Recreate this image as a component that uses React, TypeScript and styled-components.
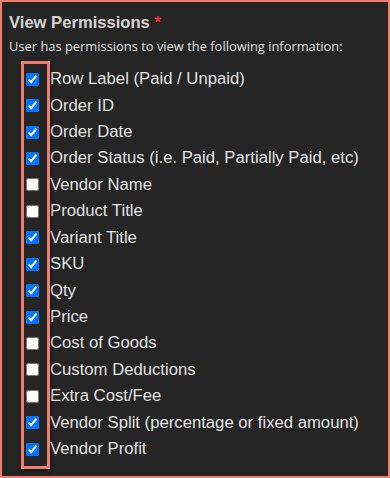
import React from "react";
import styled, { createGlobalStyle } from "styled-components";

const GlobalStyle = createGlobalStyle`
  html, body {
    margin: 0;
    padding: 0;
    background: #252525;
  }
`;

type Permission = { label: string; checked: boolean };

const permissions: Permission[] = [
  { label: "Row Label (Paid / Unpaid)", checked: true },
  { label: "Order ID", checked: true },
  { label: "Order Date", checked: true },
  { label: "Order Status (i.e. Paid, Partially Paid, etc)", checked: true },
  { label: "Vendor Name", checked: false },
  { label: "Product Title", checked: false },
  { label: "Variant Title", checked: true },
  { label: "SKU", checked: true },
  { label: "Qty", checked: true },
  { label: "Price", checked: true },
  { label: "Cost of Goods", checked: false },
  { label: "Custom Deductions", checked: false },
  { label: "Extra Cost/Fee", checked: false },
  { label: "Vendor Split (percentage or fixed amount)", checked: true },
  { label: "Vendor Profit", checked: true },
];

export default function App() {
  return (
    <>
      <GlobalStyle />
      <Panel>
        <Title>
          View Permissions <Required>*</Required>
        </Title>
        <Hint>User has permissions to view the following information:</Hint>
        <List>
          <Highlight />
          {permissions.map((p) => (
            <Row key={p.label}>
              <Box type="checkbox" defaultChecked={p.checked} />
              <Label>{p.label}</Label>
            </Row>
          ))}
        </List>
      </Panel>
    </>
  );
}

const Panel = styled.div`
  box-sizing: border-box;
  width: 390px;
  height: 478px;
  border: 2px solid #f0806e;
  background: #252525;
  padding: 11px 0 0 7px;
  color: #e3e3e3;
`;

const Title = styled.div`
  font-family: "Liberation Sans", Arial, sans-serif;
  font-weight: bold;
  font-size: 16.6px;
  line-height: 20px;
  color: #d4d4d4;
`;

const Required = styled.span`
  color: #e8312a;
`;

const Hint = styled.div`
  margin-top: 5px;
  font-family: "Open Sans", sans-serif;
  font-size: 12.9px;
  line-height: 17px;
  color: #e0e0e0;
`;

const List = styled.div`
  position: relative;
  margin-top: 11px;
  padding-left: 17px;
  display: flex;
  flex-direction: column;
`;

const Highlight = styled.div`
  position: absolute;
  left: 12px;
  top: -5px;
  width: 29px;
  height: 408px;
  box-sizing: border-box;
  border: 3px solid #f0806e;
  box-shadow: 1px 2px 4px rgba(0, 0, 0, 0.4);
  pointer-events: none;
`;

const Row = styled.label`
  display: flex;
  align-items: center;
  height: 26.43px;
`;

const Box = styled.input`
  width: 13px;
  height: 13px;
  margin: 0 11px 0 0;
  accent-color: #0075ff;
`;

const Label = styled.span`
  font-family: "Liberation Sans", Arial, sans-serif;
  font-size: 16.7px;
  color: #e3e3e3;
`;
